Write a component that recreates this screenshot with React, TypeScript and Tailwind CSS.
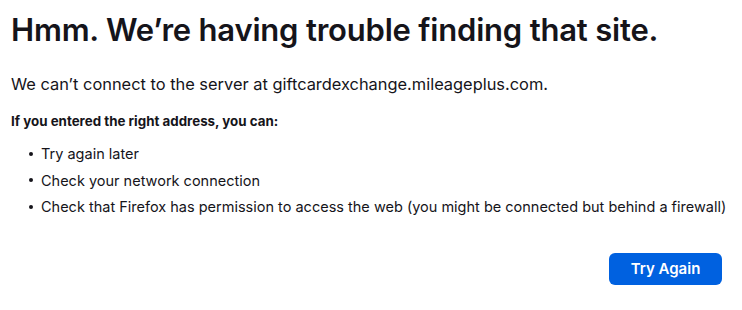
import React from 'react';

export default function App() {
  const items = [
    'Try again later',
    'Check your network connection',
    'Check that Firefox has permission to access the web (you might be connected but behind a firewall)',
  ];

  return (
    <div className="w-[742px] h-[310px] bg-white text-[#15141a] pl-[11px] pt-[10px]" style={{ fontFamily: 'Inter, "Noto Sans", sans-serif' }}>
      <h1 className="text-[31px] leading-[40px] font-semibold tracking-[-0.2px]">Hmm. We’re having trouble finding that site.</h1>
      <p className="mt-[23px] text-[16.4px] leading-[22px]">We can’t connect to the server at giftcardexchange.mileageplus.com.</p>
      <p className="mt-[17px] text-[13.35px] leading-[18px] font-bold">If you entered the right address, you can:</p>
      <ul className="mt-[13px] pl-[18px] flex flex-col gap-[5.5px]">
        {items.map((t) => (
          <li key={t} className="flex items-center text-[14.5px] leading-[21px]">
            <span className="w-[4px] h-[4px] rounded-full bg-[#15141a] mr-[8px]"></span>
            {t}
          </li>
        ))}
      </ul>
      <div className="flex justify-end pr-[20px] mt-[36px]">
        <button className="w-[113px] h-[32px] rounded-[6px] bg-[#0061e0] text-white text-[15px] font-semibold">Try Again</button>
      </div>
    </div>
  );
}
